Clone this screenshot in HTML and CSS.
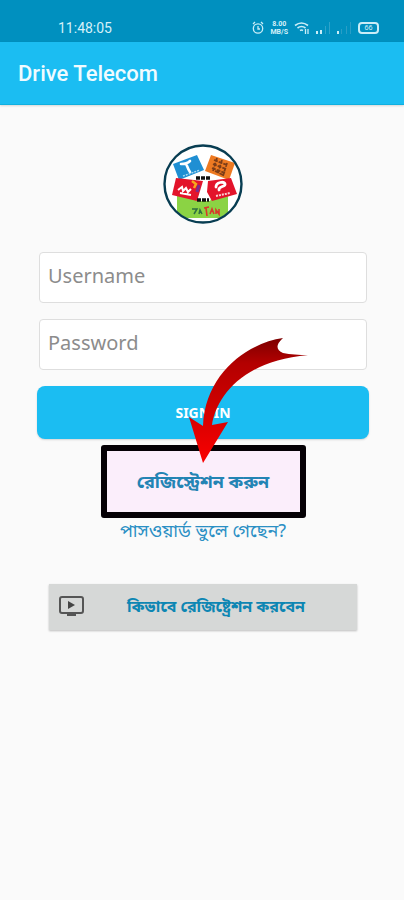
FILE: index.html
```html
<!DOCTYPE html>
<html lang="bn">
<head>
	<meta charset="utf-8">
	<title>Drive Telecom</title>
	<meta name="viewport" content="width=device-width, initial-scale=1">
	<link rel="stylesheet" href="styles.css">
</head>
<body>

	<div class="status-bar">
		<span class="clock">11:48:05</span>
		<div class="status-icons">
			<!-- alarm -->
			<svg width="12" height="14" viewBox="0 0 12 14" fill="none" stroke="#c9edf7" stroke-width="1.3">
				<circle cx="6" cy="7.5" r="4.7"/>
				<path d="M6 5v3h2M1 3l2-2M11 3L9 1"/>
			</svg>
			<div class="speed">
				<b>8.00</b>
				<b>MB/S</b>
			</div>
			<!-- wifi -->
			<svg width="16" height="14" viewBox="0 0 16 14" fill="none" stroke="#c9edf7" stroke-width="1.6">
				<path d="M1 4.500q6.500-5 13 0M3.500 7q4-3 8 0M6 9.500q1.500-1 3 0"/>
				<path d="M11.500 8v5M14 8v5" stroke-width="1.300"/>
			</svg>
			<!-- sim 1 -->
			<svg width="15" height="14" viewBox="0 0 15 14">
				<path d="M0 10h2v3H0zM4 9h2v4H4z" fill="#c9edf7"/>
				<path d="M9 5h1v8H9zM13 1h1v12h-1z" fill="#2fa3ca"/>
			</svg>
			<!-- sim 2 -->
			<svg width="15" height="14" viewBox="0 0 15 14">
				<path d="M0 10h2v3H0z" fill="#c9edf7"/>
				<path d="M4 8h1v5H4zM9 5h1v8H9zM13 1h1v12h-1z" fill="#2a9ec6"/>
			</svg>
			<span class="battery">66</span>
		</div>
	</div>

	<header class="app-bar">
		<h1>Drive Telecom</h1>
	</header>

	<main class="login">
		<svg class="logo" viewBox="0 0 80 80" role="img" aria-label="Drive Telecom">
			<defs>
				<clipPath id="round"><circle cx="40" cy="40" r="38"/></clipPath>
			</defs>
			<circle cx="40" cy="40" r="38.500" fill="#fff"/>
			<g clip-path="url(#round)">
				<path d="M14 49h51v25H14z" fill="#8bd344"/>
				<path d="M34 37h13l4 12-4 8H33z" fill="#fff"/>
				<path d="M10 20l24-9 7 15-25 10z" fill="#1f8fd3"/>
				<path d="M48 11l24 8-6 17-24-9z" fill="#ee7a22"/>
				<path d="M13 34l27 3-6 20-25-6z" fill="#e3142b"/>
				<path d="M45 37l23-3 6 16-25 7-5-9z" fill="#e3142b"/>
			</g>
			<!-- T mark -->
			<path d="M18 20c4 0 7-1 9-3M22 20c2-1 2 4 5 8" fill="none" stroke="#fff" stroke-width="2.600" stroke-linecap="round"/>
			<path d="M20 32l17-6" stroke="#a9d9f2" stroke-width="1.500" stroke-dasharray="2 1"/>
			<!-- stripes on the orange card -->
			<path d="M51 16l13 5M50 20l13 5M49 24l13 5M52 27l8 4M54 14l-4 13M59 16l-4 13M64 19l-4 13" stroke="#7c3d18" stroke-width="1.800" stroke-dasharray="4 1"/>
			<!-- left red card -->
			<path d="M15 46l4-3 1 4 3-3 2 4 3-3M17 49l11 2" fill="none" stroke="#fff" stroke-width="2"/>
			<path d="M29 37l4 3-2 4" fill="none" stroke="#f6a81c" stroke-width="2.500"/>
			<path d="M36 41l-2 7" stroke="#7a2c8c" stroke-width="3"/>
			<!-- right red card -->
			<path d="M53 43c0-5 8-6 9-3s-7 2-6 6" fill="none" stroke="#fff" stroke-width="2.800" stroke-linecap="round"/>
			<path d="M53 52l14-3" stroke="#fbd0d3" stroke-width="2" stroke-dasharray="2 1"/>
			<path d="M33 34h15M34 56h12" stroke="#111" stroke-width="3.500" stroke-dasharray="4 1"/>
			<!-- scribble on the green card -->
			<path d="M29 65h5l-3 5M36 70l1-4 2 4" fill="none" stroke="#2f7040" stroke-width="1.500"/>
			<path d="M41 64l5-1M43 64l1 8M47 70l2-5 2 5M53 70v-4l3 4v-5" fill="none" stroke="#d9382c" stroke-width="1.600"/>
			<circle cx="40" cy="40" r="38.500" fill="none" stroke="#083d52" stroke-width="2.400"/>
		</svg>

		<form class="login-form">
			<input class="field" type="text" placeholder="Username" aria-label="Username">
			<input class="field" type="password" placeholder="Password" aria-label="Password">
			<button class="sign-in" type="submit">SIGN IN</button>

			<!-- arrow pointing at the registration link -->
			<svg class="arrow" width="122" height="128" viewBox="0 0 122 128" aria-hidden="true">
				<defs>
					<linearGradient id="red" x1="0" y1="1" x2="0" y2="0">
						<stop offset="0" stop-color="#fa0000"/>
						<stop offset="0.450" stop-color="#cf0000"/>
						<stop offset="0.800" stop-color="#b30000"/>
						<stop offset="1" stop-color="#7c0000"/>
					</linearGradient>
				</defs>
				<path d="M93 1C58 6 15 36 13 89L-1 80L13 126L38 85L22 88C26 62 50 24 118 18Q104 18 93 16Q82 11 93 1z" fill="url(#red)"/>
			</svg>
		</form>

		<a class="register" href="#">রেজিস্ট্রেশন করুন</a>
		<a class="forgot" href="#">পাসওয়ার্ড ভুলে গেছেন?</a>

		<button class="how-to" type="button">
			<svg width="26" height="22" viewBox="0 0 26 22">
				<rect x="1" y="1" width="23" height="16" rx="2" fill="none" stroke="#555" stroke-width="2"/>
				<path d="M9 5l7 4-7 4z" fill="#444"/>
				<path d="M8 18h9v2H8z" fill="#555"/>
			</svg>
			<span>কিভাবে রেজিষ্ট্রেশন করবেন</span>
		</button>
	</main>

</body>
</html>
```

FILE: styles.css
```css
* {
    box-sizing: border-box;
    padding: 0;
    margin: 0;
}
body {
    min-height: 100vh;
    background: #fafafa;
    font-family: "Noto Sans", "Noto Sans Bengali", sans-serif;
}

/* status bar */
.status-bar {
    display: flex;
    align-items: center;
    justify-content: space-between;
    height: 42px;
    padding: 14px 25px 0 58px;
    background: #0090bf;
    color: #d5f1f9;
}
.clock {
    font-family: Roboto, sans-serif;
    font-size: 14px;
}
.status-icons {
    display: flex;
    align-items: center;
    gap: 6px;
}
.speed {
    display: flex;
    flex-direction: column;
    font: 7px/8px Roboto, sans-serif;
    text-align: center;
}
.battery {
    width: 21px;
    height: 12px;
    border: 2px solid #c9edf7;
    border-radius: 4px;
    font-size: 7px;
    line-height: 8px;
    text-align: center;
}

.app-bar {
    height: 63px;
    padding: 0 18px;
    border-bottom: 1px solid #0fb0e0;
    background: #1bbdf2;
    box-shadow: 0 1px 2px rgba(0, 0, 0, .15);
}
.app-bar h1 {
    color: #f0fbff;
    font: 500 22px/63px Roboto, sans-serif;
}

.login {
    display: flex;
    flex-direction: column;
    align-items: center;
    padding: 39px 35px 39px 37px;
}
.logo {
    width: 80px;
    height: 80px;
}
.login-form {
    position: relative;
    display: flex;
    flex-direction: column;
    gap: 16px;
    width: 100%;
    margin-top: 28px;
}
.field {
    height: 51px;
    margin: 0 2px;
    padding: 0 8px 4px;
    border: 1px solid #dedede;
    border-radius: 4px;
    background: #fff;
    color: #444;
    font: 20px "Noto Sans", sans-serif;
}
.field::placeholder {
    color: #8c8c8c;
    opacity: 1;
}
.sign-in {
    height: 53px;
    border: 0;
    border-radius: 8px;
    background: #1bbdf2;
    box-shadow: 0 1px 2px rgba(0, 0, 0, .15);
    color: #fff;
    font: bold 14px "Noto Sans", sans-serif;
}
.arrow {
    position: absolute;
    top: 85px;
    left: 50%;
    margin-left: -13px;
    overflow: visible;
}

.register {
    width: 205px;
    margin-top: 6px;
    border: 6px solid #050005;
    border-radius: 3px;
    background: #fbeefb;
    color: #2384b4;
    font-size: 18px;
    font-weight: bold;
    line-height: 61px;
    text-align: center;
    text-decoration: none;
}
.forgot {
    color: #2a8fc4;
    font-size: 18px;
    line-height: 24px;
    text-decoration: none;
}
.how-to {
    display: flex;
    align-items: center;
    align-self: stretch;
    height: 46px;
    margin: 42px 12px 0;
    padding: 0 10px;
    border: 0;
    background: #d6d8d7;
    box-shadow: 0 1px 2px rgba(0, 0, 0, .25);
    color: #0d86b3;
    font: bold 16px "Noto Sans", "Noto Sans Bengali", sans-serif;
}
.how-to span {
    flex: 1;
}
```
